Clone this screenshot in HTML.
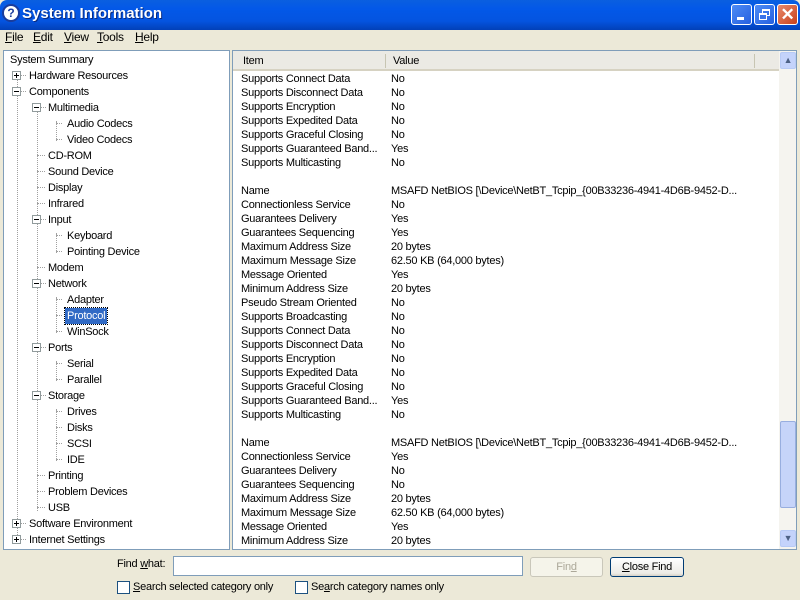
<!DOCTYPE html>
<html><head><style>
*{margin:0;padding:0;box-sizing:border-box}
body{width:800px;height:600px;overflow:hidden;background:#ECE9D8;font-family:Tahoma,"Liberation Sans",sans-serif;font-size:11px;letter-spacing:-0.25px;color:#000;position:relative}
.title{position:absolute;left:0;top:0;width:800px;height:30px;background:linear-gradient(#0A5FE0,#0358E8 30%,#0454E0 70%,#0240B8);border-radius:7px 7px 0 0}
.title .t{position:absolute;left:22px;top:5px;color:#fff;font-weight:bold;font-size:15px;letter-spacing:0;text-shadow:1px 1px #0A2B80}
.qi{position:absolute;left:2px;top:4px;width:18px;height:18px;border-radius:50%;background:#fff;border:2px solid #1A3C9C;color:#1A3C9C;font-weight:bold;font-size:12px;text-align:center;line-height:14px;letter-spacing:0}
.wb{position:absolute;top:4px;width:21px;height:21px;border:1px solid #fff;border-radius:3px;background:linear-gradient(135deg,#4E8CF5,#2560E0)}
.menu{position:absolute;top:30px;left:0;height:17px;width:800px}
.menu span{position:absolute;top:-1px;line-height:17px;font-size:12px}
.pane{position:absolute;background:#fff;border:1px solid #7F9DB9}
.abs{position:absolute;white-space:nowrap}
.tr{position:absolute;line-height:16px;white-space:nowrap}
.bx{position:absolute;width:9px;height:9px;border:1px solid #919B9C;background:#fff}
.bx:before{content:"";position:absolute;left:1px;top:3px;width:5px;height:1px;background:#000}
.bx.p:after{content:"";position:absolute;left:3px;top:1px;width:1px;height:5px;background:#000}
.vl{position:absolute;border-left:1px dotted #A0A0A0;width:0}
.hl{position:absolute;border-top:1px dotted #A0A0A0;height:0;width:6px}
.rows{position:absolute;left:241px;top:72px;line-height:14px}
.rows div{height:14px;white-space:nowrap;position:relative}
.rows div span{position:absolute;left:150px}
.btn{position:absolute;border:1px solid #003C74;border-radius:3px;background:linear-gradient(#fff,#ECEBE6 85%,#D6D0C5);text-align:center;line-height:18px;font-size:11px}
.cb{position:absolute;width:13px;height:13px;border:1px solid #1C5180;background:#fff}
</style></head><body>
<div class="title"><div class="qi">?</div><div class="t">System Information</div>
<div class="wb" style="left:731px"><div style="position:absolute;left:5px;top:12px;width:7px;height:3px;background:#fff"></div></div>
<div class="wb" style="left:754px"><div style="position:absolute;left:7px;top:4px;width:8px;height:7px;border:1px solid #fff;border-top-width:2px"></div><div style="position:absolute;left:4px;top:8px;width:8px;height:7px;border:1px solid #fff;border-top-width:2px;background:#3A74EA"></div></div>
<div class="wb" style="left:777px;background:linear-gradient(135deg,#E98A6C,#C8401C);color:#fff;font-size:17px;text-align:center;line-height:19px;font-weight:bold">✕</div>
</div>
<div class="menu"><span style="left:5px"><u>F</u>ile</span><span style="left:33px"><u>E</u>dit</span><span style="left:64px"><u>V</u>iew</span><span style="left:97px"><u>T</u>ools</span><span style="left:135px"><u>H</u>elp</span></div>

<div class="pane" style="left:3px;top:50px;width:227px;height:500px">
<div class="vl" style="left:13px;top:22px;height:468px"></div>
<div class="vl" style="left:33px;top:54px;height:406px"></div>
<div class="vl" style="left:52px;top:70px;height:20px"></div>
<div class="vl" style="left:52px;top:182px;height:20px"></div>
<div class="vl" style="left:52px;top:246px;height:36px"></div>
<div class="vl" style="left:52px;top:310px;height:20px"></div>
<div class="vl" style="left:52px;top:358px;height:52px"></div>
</div>
<div style="position:absolute;left:4px;top:51px;width:225px;height:498px">
<div class="tr" style="left:6px;top:1px">System Summary</div>
<div class="bx p" style="left:8px;top:20px"></div><div class="hl" style="left:17px;top:24px;width:5px"></div><div class="tr" style="left:25px;top:17px">Hardware Resources</div>
<div class="bx" style="left:8px;top:36px"></div><div class="hl" style="left:17px;top:40px;width:5px"></div><div class="tr" style="left:25px;top:33px">Components</div>
<div class="bx" style="left:28px;top:52px"></div><div class="hl" style="left:37px;top:56px;width:5px"></div><div class="tr" style="left:44px;top:49px">Multimedia</div>
<div class="hl" style="left:52px;top:72px"></div><div class="tr" style="left:63px;top:65px">Audio Codecs</div>
<div class="hl" style="left:52px;top:88px"></div><div class="tr" style="left:63px;top:81px">Video Codecs</div>
<div class="hl" style="left:33px;top:104px;width:8px"></div><div class="tr" style="left:44px;top:97px">CD-ROM</div>
<div class="hl" style="left:33px;top:120px;width:8px"></div><div class="tr" style="left:44px;top:113px">Sound Device</div>
<div class="hl" style="left:33px;top:136px;width:8px"></div><div class="tr" style="left:44px;top:129px">Display</div>
<div class="hl" style="left:33px;top:152px;width:8px"></div><div class="tr" style="left:44px;top:145px">Infrared</div>
<div class="bx" style="left:28px;top:164px"></div><div class="hl" style="left:37px;top:168px;width:5px"></div><div class="tr" style="left:44px;top:161px">Input</div>
<div class="hl" style="left:52px;top:184px"></div><div class="tr" style="left:63px;top:177px">Keyboard</div>
<div class="hl" style="left:52px;top:200px"></div><div class="tr" style="left:63px;top:193px">Pointing Device</div>
<div class="hl" style="left:33px;top:216px;width:8px"></div><div class="tr" style="left:44px;top:209px">Modem</div>
<div class="bx" style="left:28px;top:228px"></div><div class="hl" style="left:37px;top:232px;width:5px"></div><div class="tr" style="left:44px;top:225px">Network</div>
<div class="hl" style="left:52px;top:248px"></div><div class="tr" style="left:63px;top:241px">Adapter</div>
<div class="hl" style="left:52px;top:264px"></div><div class="tr" style="left:61px;top:257px;background:#316AC5;color:#fff;padding:0 2px;outline:1px dotted #000">Protocol</div>
<div class="hl" style="left:52px;top:280px"></div><div class="tr" style="left:63px;top:273px">WinSock</div>
<div class="bx" style="left:28px;top:292px"></div><div class="hl" style="left:37px;top:296px;width:5px"></div><div class="tr" style="left:44px;top:289px">Ports</div>
<div class="hl" style="left:52px;top:312px"></div><div class="tr" style="left:63px;top:305px">Serial</div>
<div class="hl" style="left:52px;top:328px"></div><div class="tr" style="left:63px;top:321px">Parallel</div>
<div class="bx" style="left:28px;top:340px"></div><div class="hl" style="left:37px;top:344px;width:5px"></div><div class="tr" style="left:44px;top:337px">Storage</div>
<div class="hl" style="left:52px;top:360px"></div><div class="tr" style="left:63px;top:353px">Drives</div>
<div class="hl" style="left:52px;top:376px"></div><div class="tr" style="left:63px;top:369px">Disks</div>
<div class="hl" style="left:52px;top:392px"></div><div class="tr" style="left:63px;top:385px">SCSI</div>
<div class="hl" style="left:52px;top:408px"></div><div class="tr" style="left:63px;top:401px">IDE</div>
<div class="hl" style="left:33px;top:424px;width:8px"></div><div class="tr" style="left:44px;top:417px">Printing</div>
<div class="hl" style="left:33px;top:440px;width:8px"></div><div class="tr" style="left:44px;top:433px">Problem Devices</div>
<div class="hl" style="left:33px;top:456px;width:8px"></div><div class="tr" style="left:44px;top:449px">USB</div>
<div class="bx p" style="left:8px;top:468px"></div><div class="hl" style="left:17px;top:472px;width:5px"></div><div class="tr" style="left:25px;top:465px">Software Environment</div>
<div class="bx p" style="left:8px;top:484px"></div><div class="hl" style="left:17px;top:488px;width:5px"></div><div class="tr" style="left:25px;top:481px">Internet Settings</div>
</div>

<div class="pane" style="left:232px;top:50px;width:565px;height:500px;overflow:hidden">
<div style="position:absolute;left:0;top:0;width:546px;height:20px;background:#EBEAE4;border-bottom:2px solid #D6D2C2"></div>
<div class="abs" style="left:10px;top:4px">Item</div>
<div style="position:absolute;left:152px;top:3px;width:1px;height:14px;background:#C7C5B2"></div>
<div class="abs" style="left:160px;top:4px">Value</div>
<div style="position:absolute;left:521px;top:3px;width:1px;height:14px;background:#C7C5B2"></div>
<div style="position:absolute;left:546px;top:0;width:17px;height:498px;background:#F5F4EF"></div>
<div style="position:absolute;left:547px;top:1px;width:16px;height:17px;border:1px solid #B7CAF5;border-radius:2px;background:#C4D3FB;color:#4D6185;text-align:center;font-size:9px;line-height:15px">▲</div>
<div style="position:absolute;left:547px;top:370px;width:16px;height:87px;border:1px solid #98AEDF;border-radius:2px;background:#C6D4F9"></div>
<div style="position:absolute;left:547px;top:479px;width:16px;height:17px;border:1px solid #B7CAF5;border-radius:2px;background:#C4D3FB;color:#4D6185;text-align:center;font-size:9px;line-height:15px">▼</div>
</div>
<div class="rows">
<div>Supports Connect Data<span>No</span></div>
<div>Supports Disconnect Data<span>No</span></div>
<div>Supports Encryption<span>No</span></div>
<div>Supports Expedited Data<span>No</span></div>
<div>Supports Graceful Closing<span>No</span></div>
<div>Supports Guaranteed Band...<span>Yes</span></div>
<div>Supports Multicasting<span>No</span></div>
<div></div>
<div>Name<span>MSAFD NetBIOS [\Device\NetBT_Tcpip_{00B33236-4941-4D6B-9452-D...</span></div>
<div>Connectionless Service<span>No</span></div>
<div>Guarantees Delivery<span>Yes</span></div>
<div>Guarantees Sequencing<span>Yes</span></div>
<div>Maximum Address Size<span>20 bytes</span></div>
<div>Maximum Message Size<span>62.50 KB (64,000 bytes)</span></div>
<div>Message Oriented<span>Yes</span></div>
<div>Minimum Address Size<span>20 bytes</span></div>
<div>Pseudo Stream Oriented<span>No</span></div>
<div>Supports Broadcasting<span>No</span></div>
<div>Supports Connect Data<span>No</span></div>
<div>Supports Disconnect Data<span>No</span></div>
<div>Supports Encryption<span>No</span></div>
<div>Supports Expedited Data<span>No</span></div>
<div>Supports Graceful Closing<span>No</span></div>
<div>Supports Guaranteed Band...<span>Yes</span></div>
<div>Supports Multicasting<span>No</span></div>
<div></div>
<div>Name<span>MSAFD NetBIOS [\Device\NetBT_Tcpip_{00B33236-4941-4D6B-9452-D...</span></div>
<div>Connectionless Service<span>Yes</span></div>
<div>Guarantees Delivery<span>No</span></div>
<div>Guarantees Sequencing<span>No</span></div>
<div>Maximum Address Size<span>20 bytes</span></div>
<div>Maximum Message Size<span>62.50 KB (64,000 bytes)</span></div>
<div>Message Oriented<span>Yes</span></div>
<div>Minimum Address Size<span>20 bytes</span></div>
</div>

<div class="abs" style="left:117px;top:558px">Find <u>w</u>hat:</div>
<div style="position:absolute;left:173px;top:556px;width:350px;height:20px;border:1px solid #7F9DB9;background:#fff"></div>
<div class="btn" style="left:530px;top:557px;width:73px;height:20px;border-color:#C9C7BA;color:#ACA899;background:#F5F4EA">Fin<u>d</u></div>
<div class="btn" style="left:610px;top:557px;width:74px;height:20px"><u>C</u>lose Find</div>
<div class="cb" style="left:117px;top:581px"></div><div class="abs" style="left:133px;top:581px"><u>S</u>earch selected category only</div>
<div class="cb" style="left:295px;top:581px"></div><div class="abs" style="left:311px;top:581px">Se<u>a</u>rch category names only</div>
</body></html>
